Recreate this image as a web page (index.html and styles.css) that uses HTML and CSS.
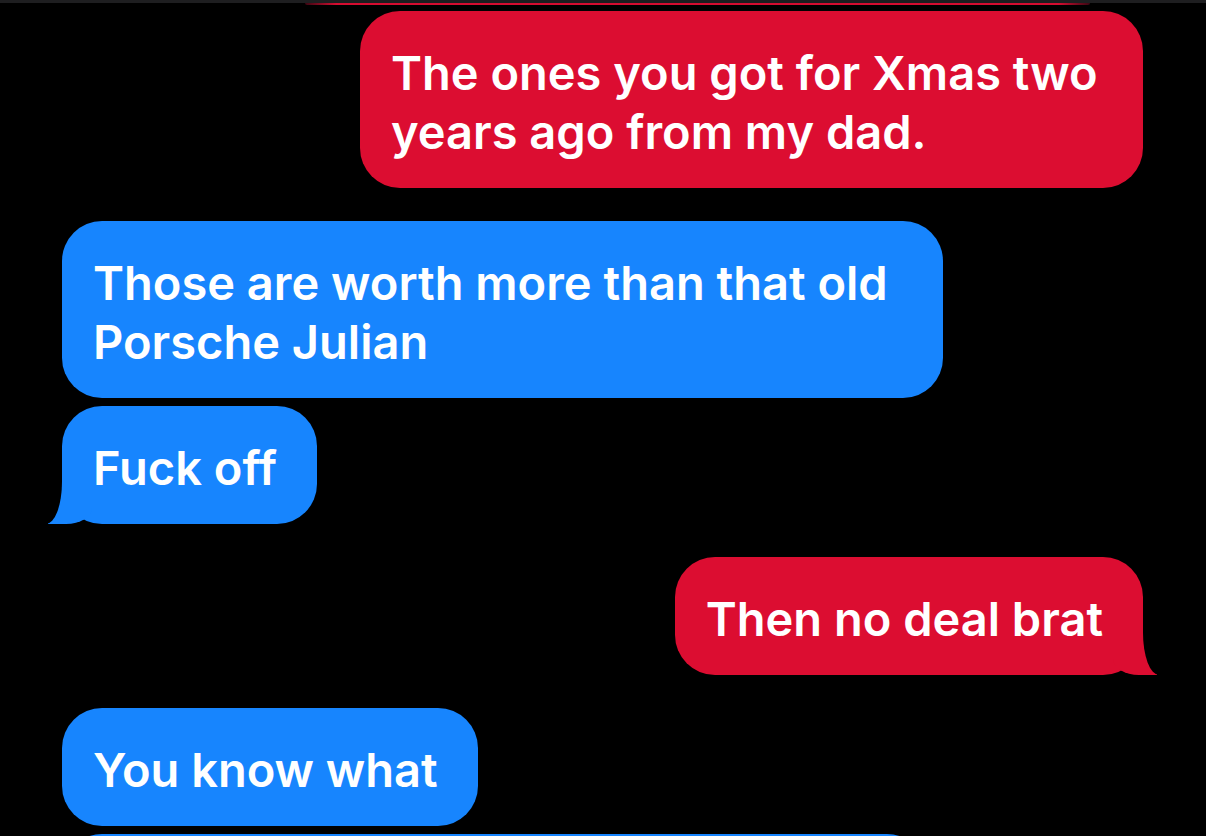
FILE: index.html
```html
<!DOCTYPE html>
<html lang="en">
<head>
    <meta charset="UTF-8">
    <meta name="viewport" content="width=device-width, initial-scale=1.0">
    <title>Messages</title>
    <link rel="stylesheet" href="styles.css">
</head>
<body>
    <div class="top-bar"></div>
    <div class="prev-edge"></div>

    <div class="thread">
        <div class="bubble sent narrow">The ones you got for Xmas two years ago from my dad.</div>

        <div class="bubble received">Those are worth more than that old Porsche Julian</div>
        <div class="bubble received tail tight">Fuck off</div>

        <div class="bubble sent tail">Then no deal brat</div>

        <div class="bubble received">You know what</div>
        <div class="bubble received partial tight"></div>
    </div>
</body>
</html>
```

FILE: styles.css
```css
* {
    margin: 0;
    padding: 0;
    box-sizing: border-box;
}

html, body {
    height: 100%;
    overflow: hidden;
}

body {
    font-family: Inter, 'Noto Sans', sans-serif;
    background-color: #000;
    color: #fff;
}

.top-bar {
    height: 3px;
    background: #1e1e20;
}

.prev-edge {
    height: 2px;
    margin: 0 116px 0 305px;
    border-radius: 0 0 40px 40px;
    background: linear-gradient(to right, #3a0612, #d60c30 4%, #d60c30 96%, #3a0612);
}

.thread {
    display: flex;
    flex-direction: column;
    padding-top: 6px;
}

.bubble {
    position: relative;
    max-width: 881px;
    padding: 32px 40px 27px 31px;
    border-radius: 40px;
    font-size: 47px;
    font-weight: 600;
    line-height: 59px;
    margin-top: 33px;
}

.bubble:first-child {
    margin-top: 0;
}

.bubble.narrow {
    max-width: 783px;
}

.bubble.tight {
    margin-top: 8px;
}

.sent {
    align-self: flex-end;
    margin-right: 63px;
    background: #dc0d31;
}

.received {
    align-self: flex-start;
    margin-left: 62px;
    background: #1785fe;
}

.partial {
    width: 865px;
    height: 120px;
}

/* iMessage style tails */
.tail::before,
.tail::after {
    content: "";
    position: absolute;
    bottom: 0;
    height: 52px;
}

.sent.tail::before {
    right: -14px;
    width: 44px;
    background: #dc0d31;
    border-bottom-left-radius: 26px 16px;
}

.sent.tail::after {
    right: -32px;
    width: 32px;
    background: #000;
    border-bottom-left-radius: 16px 42px;
}

.received.tail::before {
    left: -14px;
    width: 44px;
    background: #1785fe;
    border-bottom-right-radius: 26px 16px;
}

.received.tail::after {
    left: -32px;
    width: 32px;
    background: #000;
    border-bottom-right-radius: 16px 42px;
}
```
